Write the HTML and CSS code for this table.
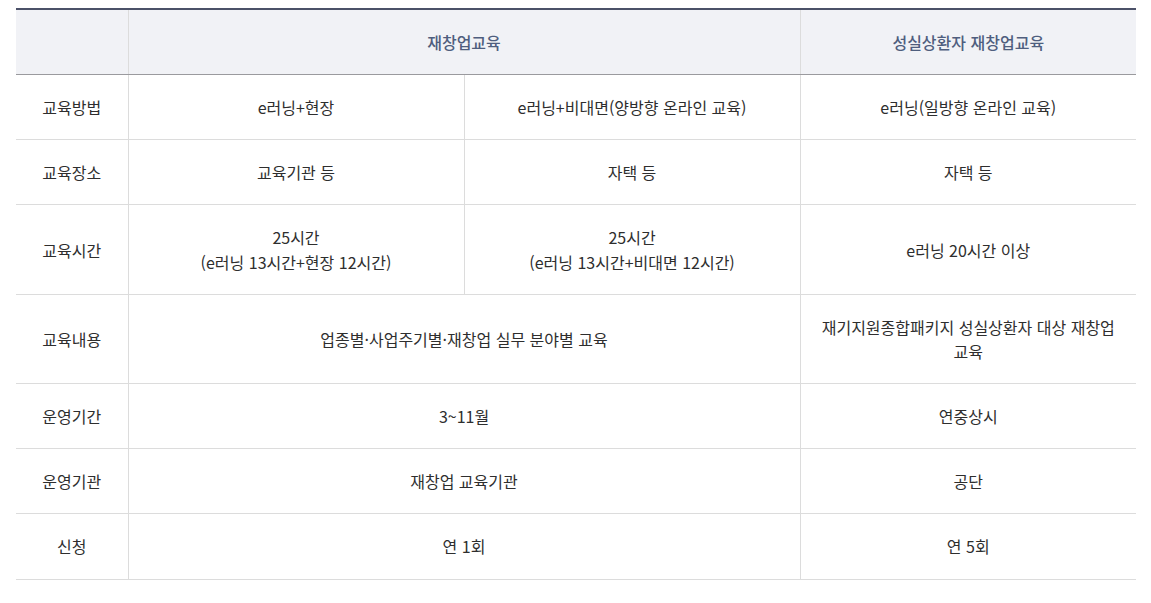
FILE: index.html
```html
<!DOCTYPE html>
<html lang="ko">
<head>
<meta charset="utf-8">
<link rel="stylesheet" href="styles.css">
</head>
<body>
<div class="wrap">
<table class="edu">
  <colgroup>
    <col class="c-label">
    <col class="c-data">
    <col class="c-data">
    <col class="c-data">
  </colgroup>
  <thead>
    <tr>
      <th></th>
      <th colspan="2">재창업교육</th>
      <th>성실상환자 재창업교육</th>
    </tr>
  </thead>
  <tbody>
    <tr>
      <th>교육방법</th>
      <td>e러닝+현장</td>
      <td>e러닝+비대면(양방향 온라인 교육)</td>
      <td>e러닝(일방향 온라인 교육)</td>
    </tr>
    <tr>
      <th>교육장소</th>
      <td>교육기관 등</td>
      <td>자택 등</td>
      <td>자택 등</td>
    </tr>
    <tr>
      <th>교육시간</th>
      <td>25시간<br>(e러닝 13시간+현장 12시간)</td>
      <td>25시간<br>(e러닝 13시간+비대면 12시간)</td>
      <td>e러닝 20시간 이상</td>
    </tr>
    <tr>
      <th>교육내용</th>
      <td colspan="2">업종별·사업주기별·재창업 실무 분야별 교육</td>
      <td>재기지원종합패키지 성실상환자 대상 재창업 교육</td>
    </tr>
    <tr>
      <th>운영기간</th>
      <td colspan="2">3~11월</td>
      <td>연중상시</td>
    </tr>
    <tr>
      <th>운영기관</th>
      <td colspan="2">재창업 교육기관</td>
      <td>공단</td>
    </tr>
    <tr>
      <th>신청</th>
      <td colspan="2">연 1회</td>
      <td>연 5회</td>
    </tr>
  </tbody>
</table>
</div>
</body>
</html>
```

FILE: styles.css
```css
html, body {
  margin: 0;
  padding: 0;
  background: #fff;
}
body {
  font-family: "Noto Sans CJK KR", "Noto Sans", sans-serif;
  color: #2e2e2e;
}
.wrap {
  padding: 8px 15px 0 16px;
}
.edu {
  width: 1120px;
  border-collapse: collapse;
  table-layout: fixed;
  border-top: 2px solid #4b5168;
  font-size: 16px;
  line-height: 24.15px;
  word-break: keep-all;
}
.c-label { width: 112px; }
.c-data { width: 336px; }
.edu th,
.edu td {
  height: 24px;
  padding: 20px 20px;
  text-align: center;
  vertical-align: middle;
  font-weight: 400;
  border-bottom: 1px solid #dcdcdc;
  border-left: 1px solid #dcdcdc;
}
.edu tr > :first-child {
  border-left: none;
}
.edu thead th {
  background: #f1f2f6;
  color: #4f5e7e;
  font-weight: 500;
  border-bottom: 1px solid #9a9a9e;
}
.edu tbody th {
  color: #2e2e2e;
  padding: 20px 8px;
}
```
